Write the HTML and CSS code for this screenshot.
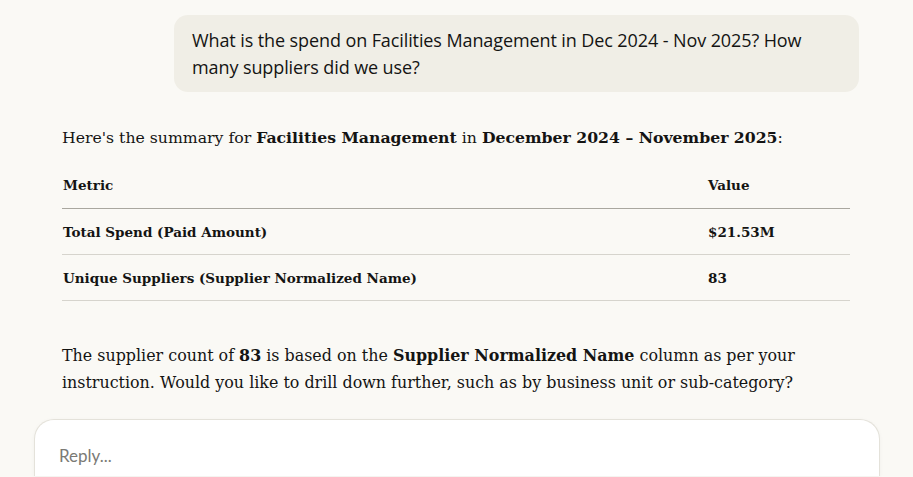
FILE: index.html
```html
<!DOCTYPE html>
<html lang="en">

<head>
    <meta charset="UTF-8">
    <meta name="viewport" content="width=device-width, initial-scale=1.0">
    <title>chat</title>
    <link rel="stylesheet" href="styles.css">
</head>

<body>
    <div class="thread">
        <div class="user-row">
            <div class="user-msg">
                What is the spend on Facilities Management in Dec 2024 - Nov 2025? How many suppliers did we use?
            </div>
        </div>

        <div class="answer">
            <p class="intro">Here's the summary for <b>Facilities Management</b> in <b>December 2024 – November 2025</b>:</p>

            <table class="summary">
                <thead>
                    <tr>
                        <th>Metric</th>
                        <th class="val">Value</th>
                    </tr>
                </thead>
                <tbody>
                    <tr>
                        <td>Total Spend (Paid Amount)</td>
                        <td class="val">$21.53M</td>
                    </tr>
                    <tr>
                        <td>Unique Suppliers (Supplier Normalized Name)</td>
                        <td class="val">83</td>
                    </tr>
                </tbody>
            </table>

            <p class="outro">The supplier count of <b>83</b> is based on the <b>Supplier Normalized Name</b> column as per your instruction. Would you like to drill down further, such as by business unit or sub-category?</p>
        </div>
    </div>

    <div class="reply-box">
        <div class="reply-placeholder">Reply...</div>
    </div>
</body>

</html>
```

FILE: styles.css
```css
html, body {
    margin: 0;
    padding: 0;
    background-color: #faf9f5;
    color: #141413;
    overflow: hidden;
}

body {
    height: 477px;
}

.thread {
    padding-top: 15px;
}

.user-row {
    display: flex;
    justify-content: flex-end;
    padding-right: 54px;
}

.user-msg {
    width: 649px;
    background-color: #f0eee6;
    border-radius: 14px;
    padding: 12px 18px 11px 18px;
    font-family: "Open Sans", sans-serif;
    font-size: 18px;
    letter-spacing: -0.1px;
    line-height: 27px;
}

.answer {
    padding: 0 63px 0 62px;
    font-family: "DejaVu Serif", serif;
}

.intro {
    margin: 32px 0 0 0;
    font-size: 15.7px;
    line-height: 28px;
}

.summary {
    width: 100%;
    border-collapse: collapse;
    margin-top: 9px;
    font-size: 13.5px;
}

.summary th, .summary td {
    text-align: left;
    font-weight: bold;
    padding: 0 1px;
    height: 45px;
    border-bottom: 1px solid #d6d4cd;
}

.summary th {
    height: 47px;
    border-bottom: 1px solid #a9a79f;
}

.summary .val {
    width: 141px;
}

.outro {
    margin: 41px 0 0 0;
    font-size: 15.9px;
    line-height: 27px;
}

.reply-box {
    margin: 23px 33px 0 34px;
    height: 56px;
    background-color: #ffffff;
    border: 1px solid #e4e2da;
    border-bottom: none;
    border-radius: 20px 20px 0 0;
    box-shadow: 0 1px 4px rgba(0, 0, 0, 0.04);
}

.reply-placeholder {
    padding: 25px 0 0 24px;
    font-family: "Lato", sans-serif;
    font-size: 17px;
    color: #7b7a75;
}
```
